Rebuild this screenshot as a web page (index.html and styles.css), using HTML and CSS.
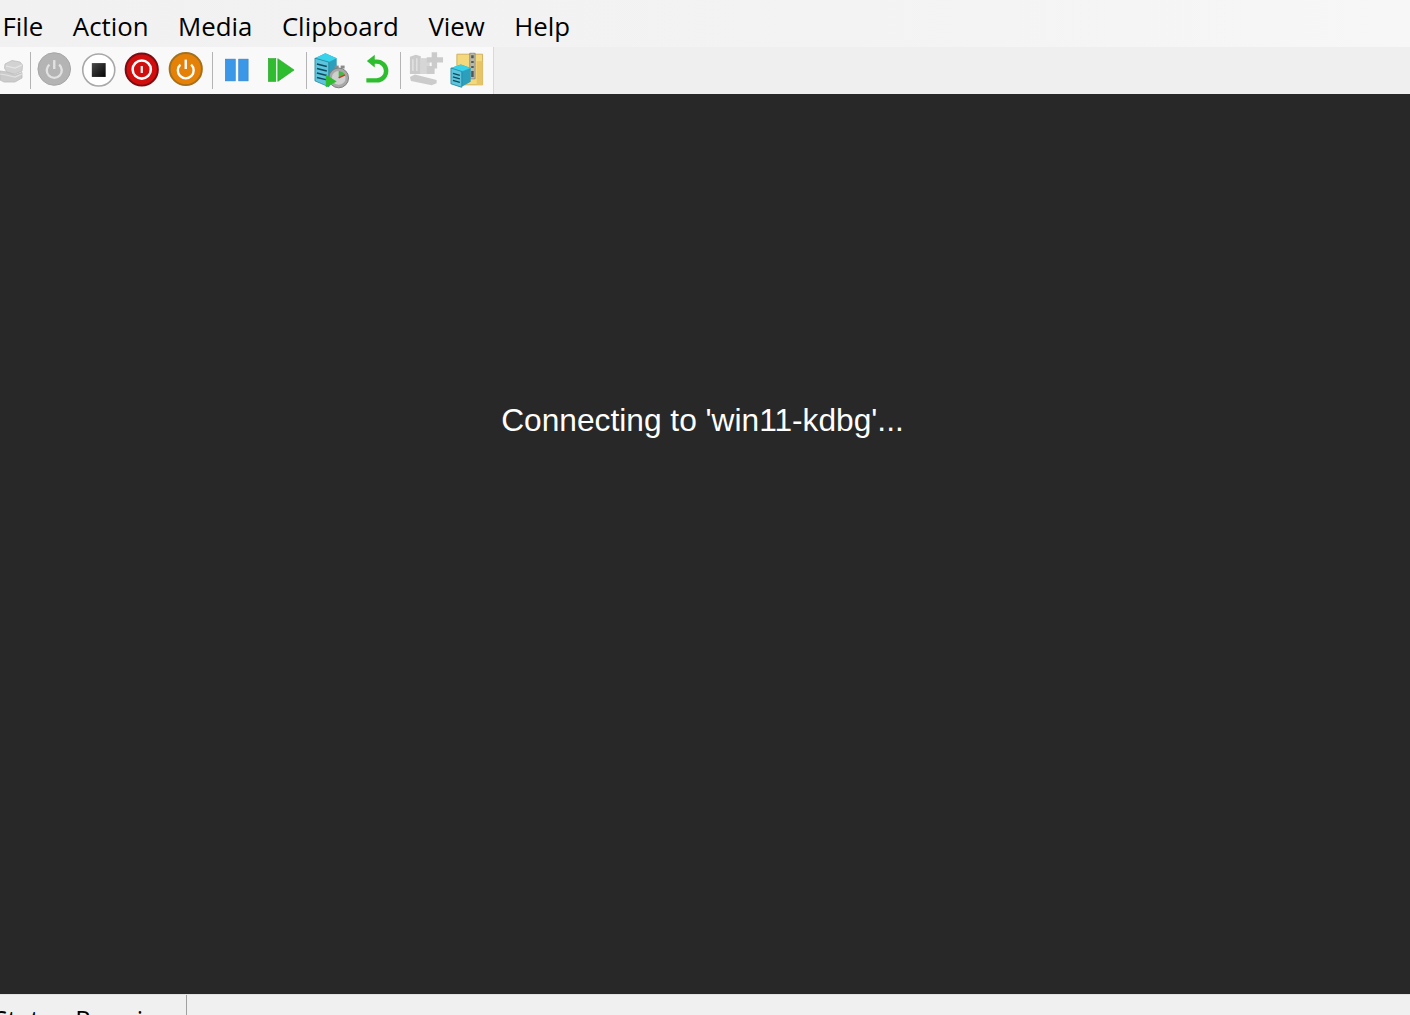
FILE: index.html
```html
<!DOCTYPE html>
<html lang="en">
<head>
<meta charset="utf-8">
<title>win11-kdbg - Virtual Machine Connection</title>
<link rel="stylesheet" href="styles.css">
</head>
<body>
<div class="app">
  <nav class="menubar">
    <span class="menu-item">File</span>
    <span class="menu-item">Action</span>
    <span class="menu-item">Media</span>
    <span class="menu-item">Clipboard</span>
    <span class="menu-item">View</span>
    <span class="menu-item">Help</span>
  </nav>
  <div class="toolbar-row">
    <div class="toolbar">
      <span class="btn btn-first">
        <svg class="ico" viewBox="0 0 27 47"><path d="M5 17 12 13.500 20 15 22.500 18 22 24 15 27 7 25.500 4.500 21z" fill="#d2d2d2" stroke="#bcbcbc" stroke-width=".8"/><path d="M6 19l9 2 7-3" fill="none" stroke="#e6e6e6" stroke-width="1.200"/><path d="M0 24 7 25 15 28 22 25.500 22 31 15 35 4 35 0 33z" fill="#cbcbcb" stroke="#bcbcbc" stroke-width=".8"/><path d="M0 27l6 1 9 2 7-3" fill="none" stroke="#e2e2e2" stroke-width="1.200"/></svg>
      </span>
      <span class="sep"></span>
      <span class="btn">
        <svg class="ico" viewBox="0 0 44 47"><circle cx="21.500" cy="22" r="16.500" fill="#b4b4b4" stroke="#a6a6a6"/><path d="M16.600 17.500a7.600 7.600 0 1 0 9.800 0" fill="none" stroke="#e2e2e2" stroke-width="2.400"/><path d="M21.500 13v9" stroke="#e2e2e2" stroke-width="2.400"/></svg>
      </span>
      <span class="btn">
        <svg class="ico" viewBox="0 0 44 47"><defs><linearGradient id="stopg" x1="0" y1="0" x2="1" y2="1"><stop offset="0" stop-color="#4a4a4a"/><stop offset="1" stop-color="#050505"/></linearGradient></defs><circle cx="22" cy="23" r="16.200" fill="#fff" stroke="#a8a8a8" stroke-width="1.600"/><rect x="15" y="16" width="14" height="14" fill="url(#stopg)"/></svg>
      </span>
      <span class="btn">
        <svg class="ico" viewBox="0 0 44 47"><circle cx="22" cy="22.500" r="16.300" fill="#d20d0d" stroke="#7c0b12" stroke-width="2"/><circle cx="22" cy="22.500" r="9.200" fill="none" stroke="#fff" stroke-width="2.600"/><path d="M22 19v7" stroke="#fff" stroke-width="2.200"/></svg>
      </span>
      <span class="btn">
        <svg class="ico" viewBox="0 0 44 47"><circle cx="22" cy="22" r="16.300" fill="#e58107" stroke="#a5701c" stroke-width="2"/><path d="M16.600 17.500a8 8 0 1 0 10.800 0" fill="none" stroke="#fff" stroke-width="2.400"/><path d="M22 12.500v9.500" stroke="#fff" stroke-width="2.400"/></svg>
      </span>
      <span class="sep sep-wide"></span>
      <span class="btn">
        <svg class="ico" viewBox="0 0 44 47"><rect x="10.500" y="12" width="10" height="22" fill="#3b98e8" stroke="#2b7fcb" stroke-width=".6"/><rect x="24" y="12" width="9.500" height="22" fill="#3b98e8" stroke="#2b7fcb" stroke-width=".6"/></svg>
      </span>
      <span class="btn">
        <svg class="ico" viewBox="0 0 44 47"><rect x="9.500" y="11.500" width="7.500" height="23" fill="#2ebd2e" stroke="#23a023" stroke-width=".6"/><path d="M19 11.500 35.500 23 19 34.500z" fill="#2ebd2e" stroke="#23a023" stroke-width=".6"/></svg>
      </span>
      <span class="sep sep-mid"></span>
      <span class="btn">
        <svg class="ico" viewBox="0 0 44 47"><path d="M5 11 15.500 6 27 11 27 30 19 40z" fill="#2c9fbc"/><path d="M5 11 15.500 6 27 11 19 15z" fill="#38d2ea"/><path d="M5 11 19 15 19 40 5 34z" fill="#5cc4dc" stroke="#1d7d92" stroke-width=".7"/><path d="M7 17l10 2.500M7 21.500l10 2.500M7 26l10 2.500M7 30.500l10 2.500" stroke="#0f4a5c" stroke-width="1.500"/><rect x="25" y="18.500" width="4" height="3" fill="#8a8a8a"/><rect x="31" y="18.500" width="4" height="3" fill="#8a8a8a"/><circle cx="29" cy="31" r="10" fill="#a8a8a8" stroke="#7d7d7d"/><circle cx="29" cy="31" r="7" fill="#cfcfcf"/><path d="M29 31 29 24A7 7 0 0 1 35.200 27.800z" fill="#45b845"/><path d="M29 31 35.500 28" stroke="#c8392b" stroke-width="1.400"/><path d="M16 27.500 27 34.500 16 40.500z" fill="#2ebd2e"/></svg>
      </span>
      <span class="btn">
        <svg class="ico" viewBox="0 0 44 47"><path d="M19 14.500 H23 a9.500 9.500 0 0 1 0 19 H12.500" fill="none" stroke="#2ebd2e" stroke-width="4.500"/><path d="M13 14 21 7.500 21 20.500z" fill="#2ebd2e"/></svg>
      </span>
      <span class="sep"></span>
      <span class="btn">
        <svg class="ico" viewBox="0 0 44 47"><g fill="#cbcbcb"><path d="M7 9.500 13 7.500 18 9 18 27 7 27z"/><path d="M18 11 27 11 27 27 18 27z" fill="#d6d6d6"/><path d="M29 5h5.500v5h6v5.500h-6v6h-5.500v-6h-5v-5.500h5z"/><path d="M24 19h8v8h-8z"/><path d="M7 30 12 27.500 34 33 34 36.500 29 38.500 8 34z"/></g><path d="M10 12v12M14 11v13" stroke="#e8e8e8" stroke-width="1.200"/></svg>
      </span>
      <span class="btn btn-zip">
        <svg class="ico" viewBox="0 0 44 47"><path d="M12 7h26v31h-26z" fill="#f4d87c" stroke="#c7a34e" stroke-width=".8"/><path d="M32 14h6v24h-6z" fill="#e8c468"/><path d="M25 6h5.500v26h-5.500z" fill="#b8b8a8" stroke="#77776a" stroke-width=".6"/><path d="M26.500 8h2.500v3h-2.500zM26.500 14h2.500v2h-2.500zM26.500 19h2.500v2h-2.500zM26.500 24h2.500v6h-2.500z" fill="#555"/><path d="M6 21 16 17.500 26 21 26 35 16 40.500 6 37z" fill="#2c9fbc"/><path d="M6 21 16 17.500 26 21 17 24.500z" fill="#38d2ea"/><path d="M6 21 17 24.500 17 40.500 6 37z" fill="#5cc4dc" stroke="#1d7d92" stroke-width=".7"/><path d="M8 26.500l7 2M8 30l7 2M8 33.500l7 2" stroke="#0f4a5c" stroke-width="1.300"/></svg>
      </span>
    </div>
  </div>
  <main class="screen">
    <p class="message">Connecting to 'win11-kdbg'...</p>
  </main>
  <footer class="statusbar">
    <div class="status-cell"><span class="status-label">Status:</span><span class="status-value">Running</span></div>
  </footer>
</div>
</body>
</html>
```

FILE: styles.css
```css
html, body {
  margin: 0;
  height: 100%;
  overflow: hidden;
}

.app {
  display: flex;
  flex-direction: column;
  height: 1015px;
  font-family: "Open Sans", "Noto Sans", sans-serif;
  color: #000;
}

.menubar {
  display: flex;
  flex: none;
  align-items: center;
  gap: 29.500px;
  height: 47px;
  padding-left: 2.500px;
  padding-top: 6px;
  box-sizing: border-box;
  background: linear-gradient(90deg, #f1f1f1, #f3f3f3 60%, #f7f7f7);
  font-size: 25.800px;
  line-height: 1;
}

.toolbar-row {
  flex: none;
  height: 47px;
  background: #efefef;
}

.toolbar {
  display: flex;
  align-items: stretch;
  width: 494px;
  height: 47px;
  box-sizing: border-box;
  background: #f9f9f9;
  border-right: 1px solid #d9d9d9;
}

.btn {
  flex: none;
  width: 43.500px;
  height: 47px;
}

.btn-first {
  width: 27px;
}

.btn-zip {
  margin-left: -2px;
}

.ico {
  display: block;
  width: 100%;
  height: 100%;
  overflow: visible;
  filter: blur(0.35px);
}

.sep {
  flex: none;
  width: 1px;
  height: 37px;
  margin: 5px 2px 0 3px;
  background: #b4b4b4;
}

.sep-wide {
  margin-left: 5px;
}

.sep-mid {
  margin-left: 4px;
  margin-right: 3px;
}

.screen {
  flex: 1;
  min-height: 0;
  background: #282828;
  padding-top: 306px;
  padding-right: 5px;
  box-sizing: border-box;
}

.message {
  margin: 0;
  text-align: center;
  color: #fff;
  font-family: "Liberation Sans", Arial, sans-serif;
  font-size: 31.700px;
  line-height: 40px;
}

.statusbar {
  flex: none;
  height: 21px;
  box-sizing: border-box;
  border-top: 1px solid #e2e2e2;
  background: #f0f0f0;
  overflow: hidden;
}

.status-cell {
  display: flex;
  gap: 2px;
  width: 187px;
  height: 21px;
  box-sizing: border-box;
  padding-top: 7px;
  border-right: 1px solid #a0a0a0;
  font-size: 25px;
  line-height: 34px;
  white-space: nowrap;
}

.status-label {
  margin-left: -6px;
}
```
